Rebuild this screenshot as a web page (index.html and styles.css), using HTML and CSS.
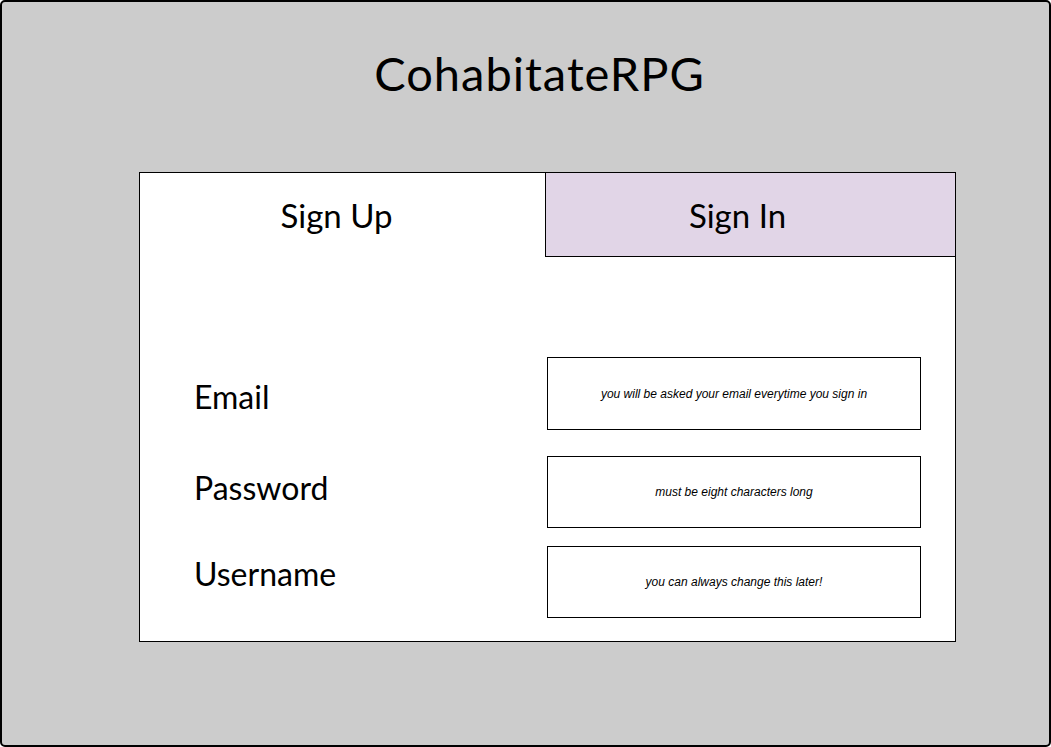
FILE: index.html
```html
<!DOCTYPE html>
<html>
<head>
<meta charset="utf-8">
<title>CohabitateRPG</title>
<link rel="stylesheet" href="styles.css">
</head>
<body>
<div class="frame">
  <h1 class="title">CohabitateRPG</h1>
  <div class="panel">
    <div class="tabs">
      <div class="tab tab-active">Sign Up</div>
      <div class="tab tab-inactive">Sign In</div>
    </div>
    <div class="form">
      <div class="row row-email">
        <div class="label">Email</div>
        <div class="field">you will be asked your email everytime you sign in</div>
      </div>
      <div class="row row-password">
        <div class="label">Password</div>
        <div class="field">must be eight characters long</div>
      </div>
      <div class="row row-username">
        <div class="label">Username</div>
        <div class="field">you can always change this later!</div>
      </div>
    </div>
  </div>
</div>
</body>
</html>
```
FILE: styles.css
```css
html, body {
  margin: 0;
  padding: 0;
}
body {
  font-family: Lato, "Noto Sans", sans-serif;
  color: #000;
}
.frame {
  box-sizing: border-box;
  width: 1051px;
  height: 747px;
  background: #cccccc;
  border: 2px solid #000;
  border-radius: 5px;
  overflow: hidden;
}
.title {
  margin: 0;
  padding-top: 39px;
  height: 130px;
  box-sizing: border-box;
  text-align: center;
  font-weight: 400;
  font-size: 47px;
  line-height: 64px;
  letter-spacing: 1px;
  padding-left: 28px;
}
.panel {
  box-sizing: border-box;
  margin-left: 137px;
  margin-top: 40px;
  width: 817px;
  height: 470px;
  background: #fff;
  border: 1px solid #000;
}
.tabs {
  display: flex;
  height: 84px;
}
.tab {
  display: flex;
  align-items: center;
  justify-content: center;
  font-size: 33px;
  box-sizing: border-box;
}
.tab-active {
  width: 405px;
  padding-right: 12px;
}
.tab-inactive {
  flex: 1;
  background: #e1d5e7;
  border-left: 1px solid #000;
  border-bottom: 1px solid #000;
  padding-right: 26px;
}
.form {
  padding-top: 100px;
  display: flex;
  flex-direction: column;
}
.row {
  display: grid;
  grid-template-columns: 407px 374px;
  height: 72px;
}
.row-email {
  height: 73px;
  margin-bottom: 26px;
}
.row-password {
  margin-bottom: 18px;
}
.label {
  padding-left: 54px;
  font-size: 32px;
  line-height: 40px;
}
.row-email .label { padding-top: 20px; }
.row-password .label { padding-top: 12px; }
.row-username .label { padding-top: 8px; }
.field {
  box-sizing: border-box;
  border: 1px solid #000;
  display: flex;
  align-items: center;
  justify-content: center;
  font-family: "Liberation Sans", Arial, sans-serif;
  font-style: italic;
  font-size: 12px;
  background: #fff;
}
```
